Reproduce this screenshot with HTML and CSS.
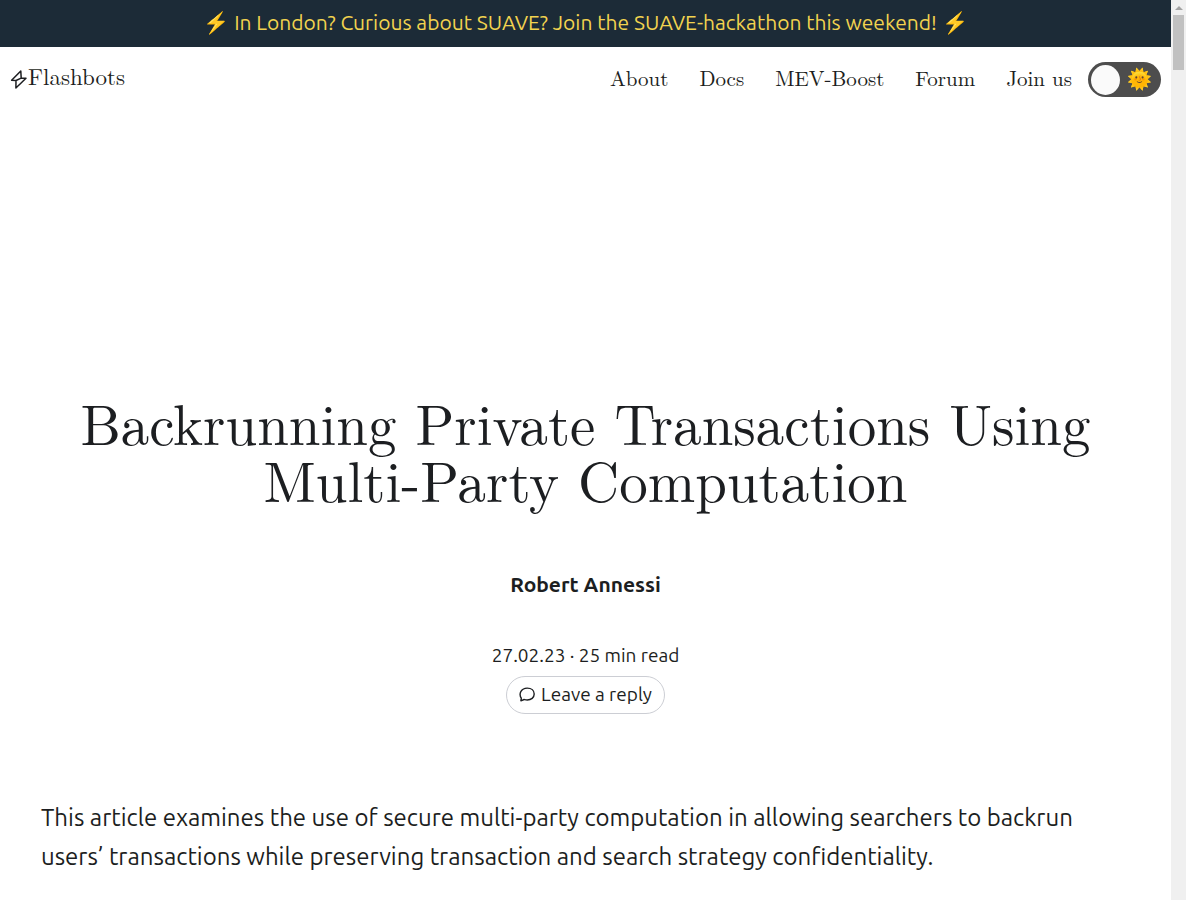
FILE: index.html
```
<!DOCTYPE html>
<html lang="en">
<head>
<meta charset="utf-8">
<meta name="viewport" content="width=device-width, initial-scale=1">
<title>Backrunning Private Transactions Using Multi-Party Computation | Flashbots</title>
<link rel="stylesheet" href="styles.css">
</head>
<body>
<div class="page">
  <div class="site">
    <a class="banner" href="#hackathon">⚡ In London? Curious about SUAVE? Join the SUAVE-hackathon this weekend! ⚡</a>
    <header class="header">
      <a class="brand" href="#home">
        <svg class="brand-mark" viewBox="0 1 18 20" aria-hidden="true">
          <path d="M10.800 2 1.600 11.300 6 11.500 5.900 19 16 9.300 11.200 9.100zM11.200 9.100 6 11.500"/>
        </svg>
        <span class="brand-name">Flashbots</span>
      </a>
      <nav class="nav" aria-label="Main">
        <a href="#about">About</a>
        <a href="#docs">Docs</a>
        <a href="#mev-boost">MEV-Boost</a>
        <a href="#forum">Forum</a>
        <a href="#join">Join us</a>
      </nav>
      <button class="theme-toggle" type="button" aria-label="Switch theme">
        <span class="knob"></span>
        <span class="sun">🌞</span>
      </button>
    </header>
    <main class="article">
      <h1 class="title">Backrunning Private Transactions Using Multi-Party Computation</h1>
      <p class="author">Robert Annessi</p>
      <p class="meta">27.02.23 · 25 min read</p>
      <a class="reply" href="#reply">
        <svg class="reply-icon" viewBox="0 0 16 16" aria-hidden="true">
          <path d="M1.900 14.800 2.300 12.100C-.7 7.500 2.400 2.100 8.200 2.100c4.300 0 7 2.500 7 6 0 3.500-3.100 5.900-6.900 5.900-1.400 0-2.300-.3-3.200-.5z"/>
        </svg>
        <span>Leave a reply</span>
      </a>
      <p class="lead">This article examines the use of secure multi-party computation in allowing searchers to backrun users’ transactions while preserving transaction and search strategy confidentiality.</p>
    </main>
  </div>
  <div class="scrollbar" aria-hidden="true">
    <span class="scroll-arrow"></span>
    <span class="scroll-thumb"></span>
  </div>
</div>
</body>
</html>
```
FILE: styles.css
```
* { box-sizing: border-box; }

body {
  margin: 0;
  background: #fff;
  color: #1c1e21;
  font-family: Ubuntu, "Noto Sans", sans-serif;
}

a { color: inherit; text-decoration: none; }

.page { display: flex; min-height: 100vh; }
.site { flex: 1; min-width: 0; }

.banner {
  display: block;
  padding: 7px 8px 9px;
  background: #1c2b37;
  color: #f2d34f;
  font-size: 21px;
  line-height: 31px;
  text-align: center;
}

.header {
  display: flex;
  align-items: center;
  padding: 15px 10px;
  font-family: "Latin Modern Roman", "Liberation Serif", serif;
}
.brand { display: flex; align-items: center; font-size: 23px; line-height: 28px; }
.brand-name { padding-bottom: 7px; }
.brand-mark { width: 18px; height: 20px; fill: none; stroke: #1c1e21; stroke-width: 1.5; stroke-linejoin: round; }
.nav { display: flex; gap: 31px; margin-left: auto; padding-bottom: 5px; font-size: 21px; line-height: 30px; }

.theme-toggle {
  display: flex;
  align-items: center;
  justify-content: space-between;
  width: 73px;
  height: 35px;
  margin-left: 16px;
  padding: 0 9px 0 3px;
  border: 0;
  border-radius: 18px;
  background: #4d4d4d;
}
.knob { width: 29px; height: 30px; border-radius: 50%; background: #fafafa; }
.sun { padding-bottom: 1px; font-family: "Noto Color Emoji", sans-serif; font-size: 20px; line-height: 30px; }

.article {
  display: flex;
  flex-direction: column;
  align-items: center;
  padding: 281px 41px 24px;
}
.article > * { margin: 0; }
.title {
  font-family: "Latin Modern Roman", "Liberation Serif", serif;
  font-size: 57px;
  font-weight: 400;
  line-height: 57px;
  text-align: center;
}
.article .author { margin-top: 61px; font-size: 21px; font-weight: 700; line-height: 32px; }
.article .meta { margin-top: 41px; font-size: 19px; line-height: 28px; }
.article .reply {
  display: flex;
  align-items: center;
  gap: 6px;
  margin-top: 7px;
  padding: 3px 12px 5px;
  border: 1px solid #ccced4;
  border-radius: 19px;
  font-size: 19px;
  line-height: 28px;
}
.reply-icon { width: 16px; height: 16px; fill: none; stroke: #1c1e21; stroke-width: 1.4; stroke-linejoin: round; }
.article .lead { align-self: stretch; margin-top: 84px; font-size: 24px; line-height: 39px; }

.scrollbar {
  display: flex;
  flex-direction: column;
  align-items: center;
  width: 15px;
  background: #f0f0f0;
}
.scroll-arrow {
  margin: 6px 0 5px;
  border: 4px solid transparent;
  border-top: 0;
  border-bottom-color: #a3a3a3;
}
.scroll-thumb { width: 11px; height: 55px; background: #c1c1c1; }
```
